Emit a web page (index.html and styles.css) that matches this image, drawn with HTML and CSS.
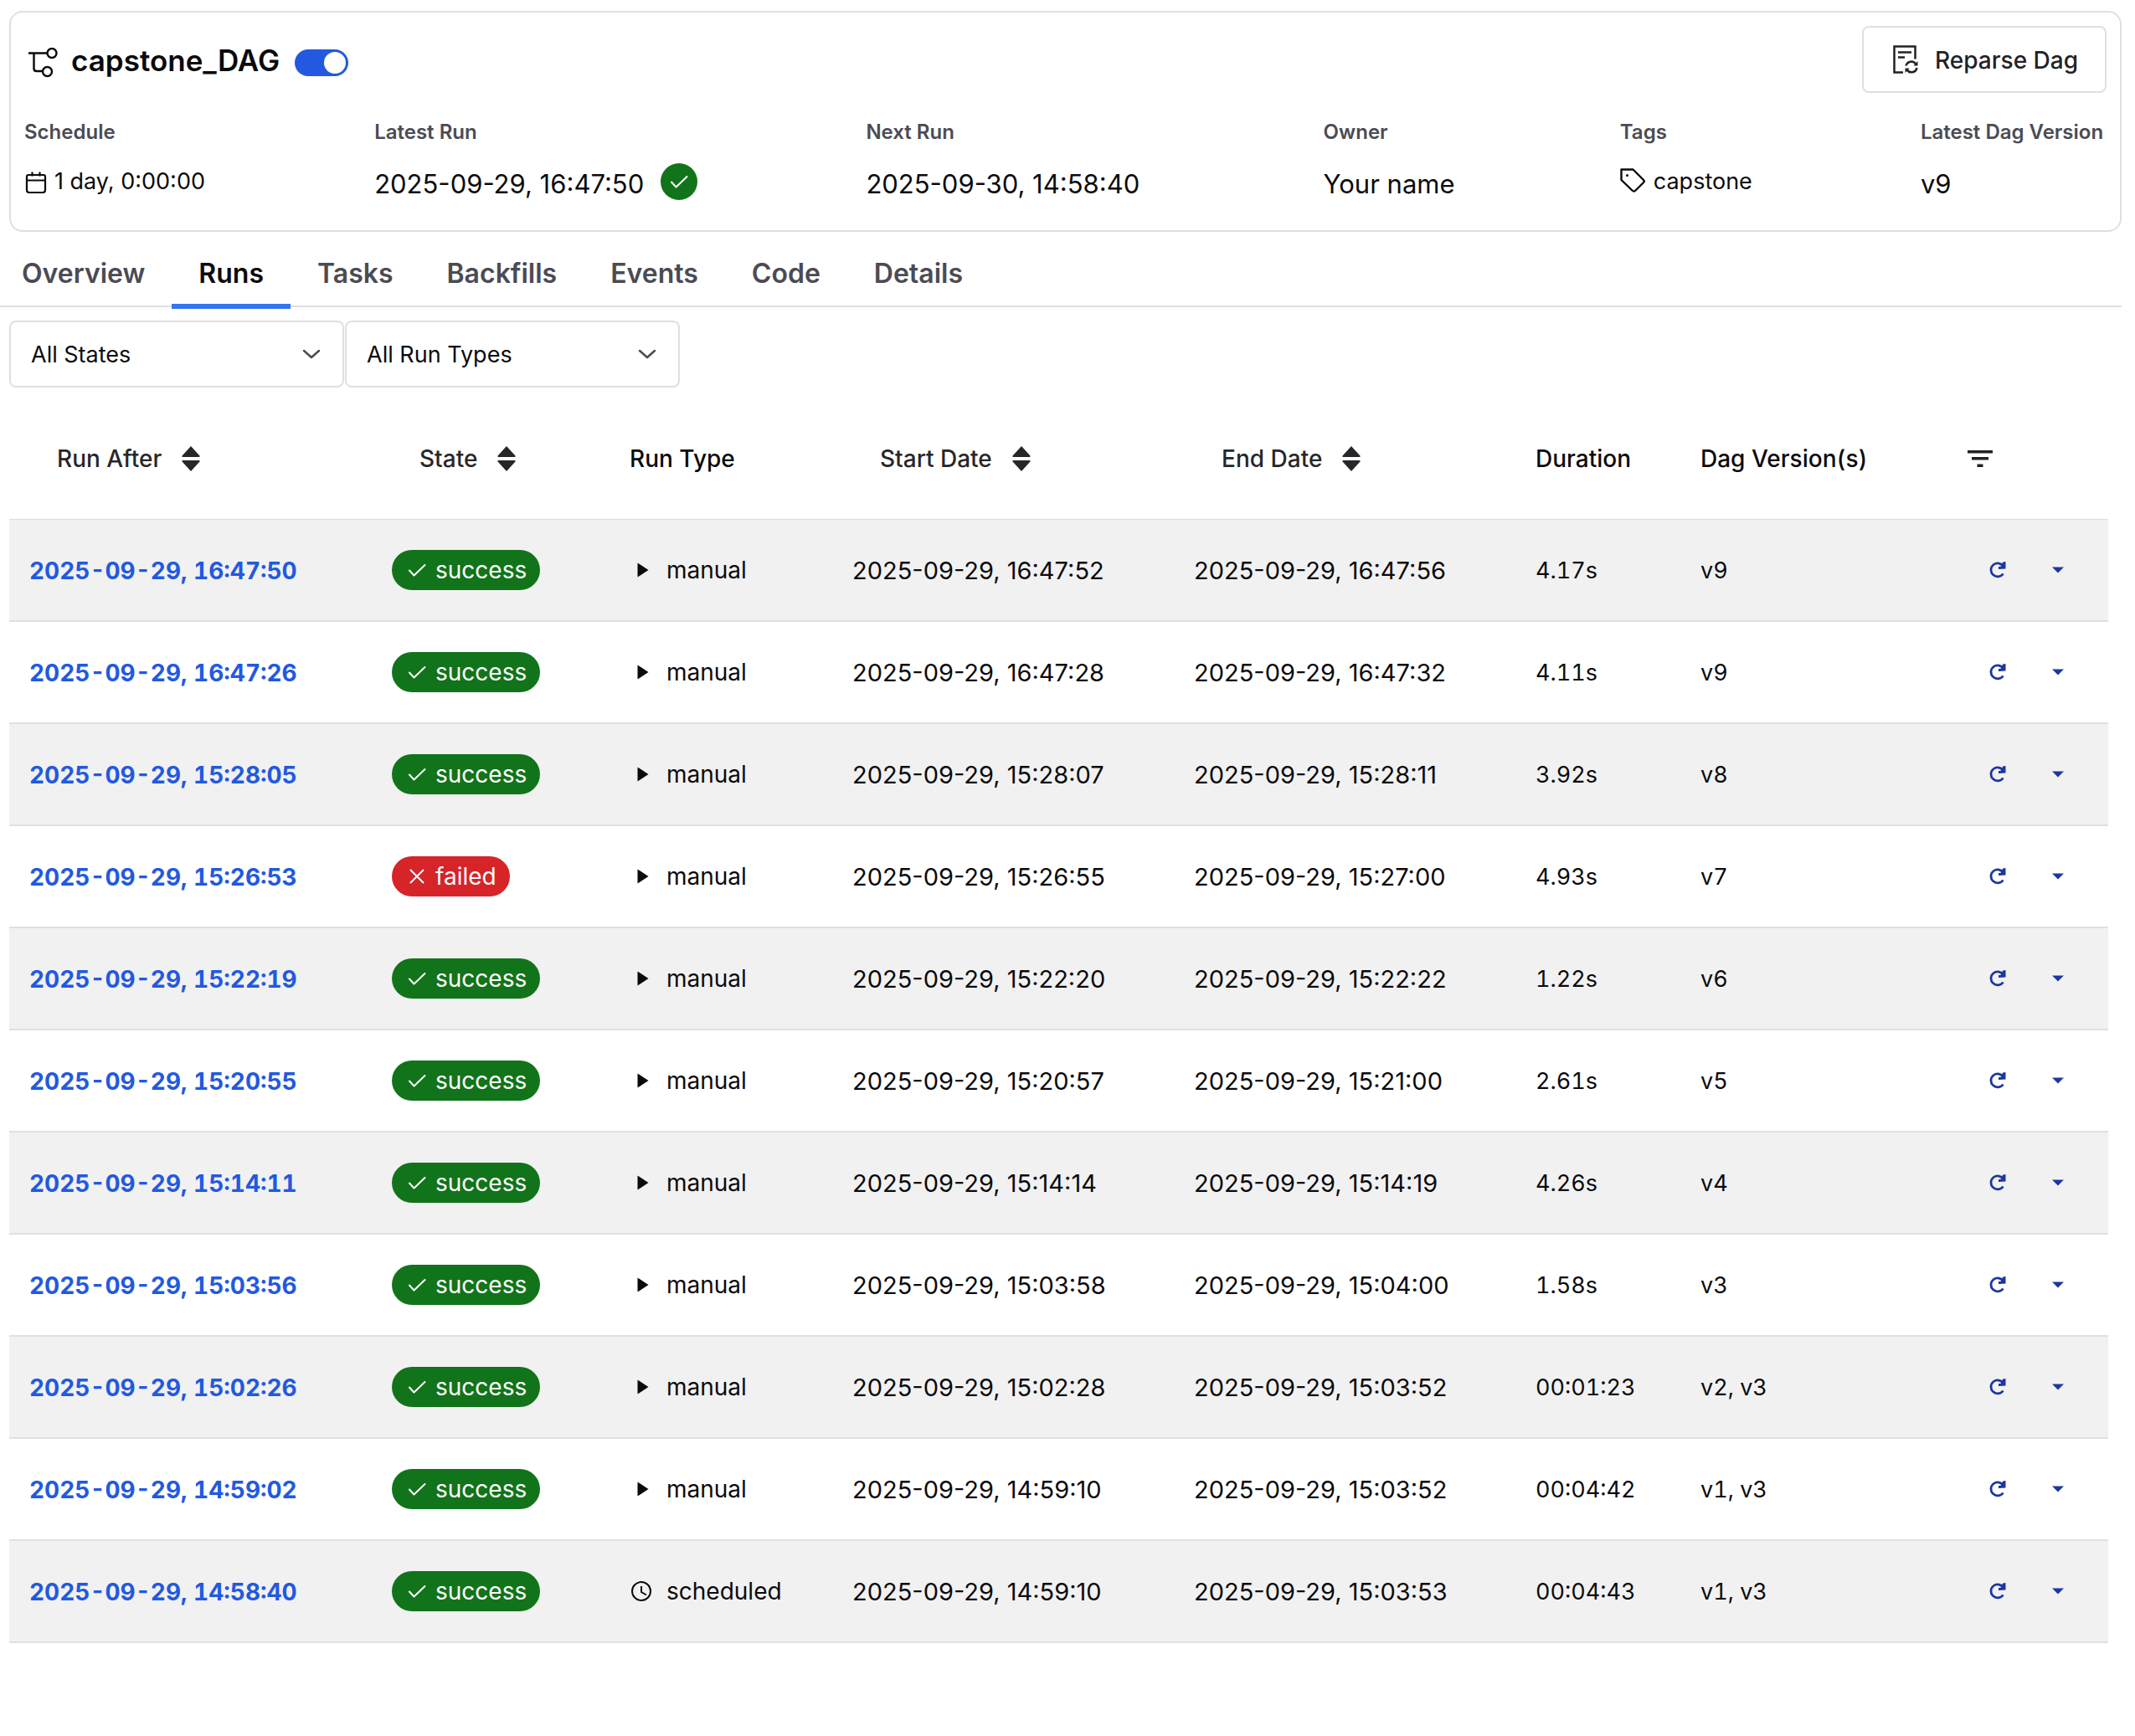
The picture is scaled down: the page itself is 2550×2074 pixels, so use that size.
FILE: index.html
```html
<!DOCTYPE html>
<html lang="en">
<head>
<meta charset="utf-8">
<meta name="viewport" content="width=device-width">
<title>capstone_DAG</title>
<link rel="stylesheet" href="styles.css">
</head>
<body>
<svg class="sprite" aria-hidden="true">
  <symbol id="i-check" viewBox="0 0 28 28"><path d="M5 14.500l5.500 6L23.500 8" fill="none" stroke="currentColor" stroke-width="2" stroke-linecap="round" stroke-linejoin="round"/></symbol>
  <symbol id="i-x" viewBox="0 0 28 28"><path d="M6.500 6.500l15 15M21.500 6.500l-15 15" fill="none" stroke="currentColor" stroke-width="2" stroke-linecap="round"/></symbol>
  <symbol id="i-play" viewBox="0 0 28 28"><path d="M9.500 5.500v17L22.500 14z" fill="currentColor"/></symbol>
  <symbol id="i-clock" viewBox="0 0 28 28"><g fill="none" stroke="currentColor" stroke-width="2"><circle cx="14" cy="14" r="11"/><path d="M14 8v7l6 3.500"/></g></symbol>
  <symbol id="i-sort" viewBox="0 0 22 30"><path d="M11 0l10 11q2 2-1 2H2q-3 0-1-2zM11 30l10-11q2-2-1-2H2q-3 0-1 2z" fill="currentColor"/></symbol>
  <symbol id="i-chevron" viewBox="0 0 28 28"><path d="M5 10l9 8 9-8" fill="none" stroke="currentColor" stroke-width="2.500" stroke-linecap="round" stroke-linejoin="round"/></symbol>
  <symbol id="i-redo" viewBox="0 0 20 20"><path d="M16.500 14.500a8 8 0 1 1 .500-8.500" fill="none" stroke="currentColor" stroke-width="2.800"/><path d="M16.200 .500l3.300-.500v8.500l-8.500.500v-3h2.500z" fill="currentColor"/></symbol>
  <symbol id="i-down" viewBox="0 0 14 8"><path d="M0 .500h14L7 7.500z" fill="currentColor"/></symbol>
</svg>
<main class="page">
  <section class="card">
    <header class="card-head">
      <svg class="dag-icon" viewBox="0 0 36 36"><g fill="none" stroke="currentColor" stroke-width="2.400"><path d="M0 6.500h22M6.500 6.500v18.500q0 3 3 3h7"/><circle cx="28" cy="6.500" r="5.500"/><circle cx="22.500" cy="28.500" r="5.500"/></g></svg>
      <h1 class="title">capstone_DAG</h1>
      <input class="switch" type="checkbox" role="switch" aria-label="Toggle DAG" checked>
      <button class="reparse" type="button">
        <svg class="reparse-icon" viewBox="0 0 30 34"><g fill="none" stroke="currentColor" stroke-width="2.500"><path d="M12 32.500H1.500v-31h25v15M6 8.500h16M6 14.500h8"/><path d="M15.500 24.500a6.500 6.500 0 0 1 12-1.500M28.500 27a6.500 6.500 0 0 1-12 2"/></g><path d="M24.500 24.500h5V19zM14.500 33v-5.500h5z" fill="currentColor"/></svg>
        Reparse Dag
      </button>
    </header>
    <dl class="stats">
      <div class="stat"><dt>Schedule</dt><dd class="compact"><svg class="icon" viewBox="0 0 28 28"><path d="M5 6h18q2 0 2 2v16q0 3-3 3H6q-3 0-3-3V8q0-2 2-2zM3 12.500h22M9.500 2.500v5M18.500 2.500v5" fill="none" stroke="currentColor" stroke-width="2.200"/></svg>1 day, 0:00:00</dd></div>
      <div class="stat"><dt>Latest Run</dt><dd>2025-09-29, 16:47:50<span class="dot"><svg class="icon"><use href="#i-check"/></svg></span></dd></div>
      <div class="stat"><dt>Next Run</dt><dd>2025-09-30, 14:58:40</dd></div>
      <div class="stat"><dt>Owner</dt><dd>Your name</dd></div>
      <div class="stat"><dt>Tags</dt><dd class="compact"><svg class="tag-icon" viewBox="0 0 32 32"><path d="M1.500 1.500h14L28 14q1.500 1.500 0 3l-9.500 9.500q-2 2-4 0L1.500 14z" fill="none" stroke="currentColor" stroke-width="2.400" stroke-linejoin="round"/><circle cx="8.500" cy="8.500" r="1.500" fill="currentColor"/></svg>capstone</dd></div>
      <div class="stat"><dt>Latest Dag Version</dt><dd>v9</dd></div>
    </dl>
  </section>

  <nav class="tabs">
    <a href="#overview">Overview</a>
    <a href="#runs" class="active" aria-current="page">Runs</a>
    <a href="#tasks">Tasks</a>
    <a href="#backfills">Backfills</a>
    <a href="#events">Events</a>
    <a href="#code">Code</a>
    <a href="#details">Details</a>
  </nav>

  <div class="filters">
    <div class="select"><select aria-label="State"><option>All States</option></select><svg class="select-icon"><use href="#i-chevron"/></svg></div>
    <div class="select"><select aria-label="Run type"><option>All Run Types</option></select><svg class="select-icon"><use href="#i-chevron"/></svg></div>
  </div>

  <table class="runs">
    <colgroup><col class="c-after"><col class="c-state"><col class="c-type"><col class="c-date"><col class="c-date"><col class="c-duration"><col class="c-version"><col class="c-actions"></colgroup>
    <thead>
      <tr>
        <th><button class="sort" type="button">Run After<svg class="sort-icon"><use href="#i-sort"/></svg></button></th>
        <th><button class="sort" type="button">State<svg class="sort-icon"><use href="#i-sort"/></svg></button></th>
        <th>Run Type</th>
        <th><button class="sort" type="button">Start Date<svg class="sort-icon"><use href="#i-sort"/></svg></button></th>
        <th><button class="sort" type="button">End Date<svg class="sort-icon"><use href="#i-sort"/></svg></button></th>
        <th>Duration</th>
        <th>Dag Version(s)</th>
        <th><button class="columns" type="button" aria-label="Filter columns"><svg class="columns-icon" viewBox="0 0 30 20"><path d="M0 0h30v3.500H0zM5 8h20v3.500H5zM11.500 16.500h7V20h-7z" fill="currentColor"/></svg></button></th>
      </tr>
    </thead>
    <tbody id="rows"></tbody>
  </table>
</main>
<script src="runs.js"></script>
</body>
</html>
```

FILE: styles.css
```css
* { box-sizing: border-box; }
body { margin: 0; background: #fff; color: #0b0b0d; font: 28px/40px Inter, sans-serif; }
button, select { font: inherit; color: inherit; background: none; border: 0; padding: 0; margin: 0; }
svg { display: block; flex: none; }
.sprite { display: none; }
.icon { width: 28px; height: 28px; }

.page { padding: 13px 16px 0 0; }

.card { margin-left: 11px; padding: 16px 16px 36px; border: 2px solid #e0e0e0; border-radius: 16px; }
.card-head { display: flex; align-items: center; height: 80px; padding-left: 5px; }
.dag-icon { width: 36px; height: 36px; margin: 8px 15px 0 0; }
.title { margin: 0 18px 0 0; padding-top: 2px; font-size: 35px; line-height: 48px; font-weight: 600; }
.switch { appearance: none; width: 64px; height: 32px; margin: 8px 0 0; padding: 3px; border-radius: 16px; background: #2259e0; display: flex; justify-content: flex-end; }
.switch::before { content: ""; width: 26px; height: 26px; border-radius: 50%; background: #fff; }
.reparse { display: flex; align-items: center; gap: 20px; height: 80px; margin-left: auto; padding: 2px 32px 0 35px; border: 2px solid #e0e0e0; border-radius: 8px; color: #222225; font-weight: 500; }
.reparse-icon { width: 30px; height: 34px; margin-bottom: 2px; }

.stats { display: grid; grid-template-columns: 418fr 587fr 546fr 354fr 359fr 222fr; margin: 31px 0 0; }
.stat { min-width: 0; white-space: nowrap; }
dt { font-size: 24px; line-height: 32px; font-weight: 600; color: #4b4b54; }
dd { display: flex; align-items: flex-end; height: 44px; margin: 21px 0 0; font-size: 31px; line-height: 38px; }
dd.compact { align-items: center; gap: 8px; font-size: 27px; }
.tag-icon { width: 32px; height: 32px; }
.dot { display: flex; align-items: center; justify-content: center; width: 44px; height: 44px; margin-left: 20px; border-radius: 50%; background: #11741a; color: #fff; }

.tabs { display: flex; height: 90px; padding-top: 20px; border-bottom: 2px solid #e0e0e0; }
.tabs a { height: 72px; padding: 10px 32px 0; color: #4b4b54; font-size: 32px; font-weight: 600; text-decoration: none; }
.tabs a:first-child { padding-left: 26px; }
.tabs a.active { color: #0b0b0d; border-bottom: 6px solid #3575ee; }

.filters { display: flex; gap: 1px; margin: 16px 0 0 11px; }
.select { position: relative; width: 400px; }
.select select { appearance: none; display: block; width: 100%; height: 80px; padding: 2px 24px 0; border: 2px solid #e0e0e0; border-radius: 8px; background: #fff; font-size: 27px; }
.select-icon { position: absolute; right: 25px; top: 26px; width: 28px; height: 28px; color: #4b4b54; pointer-events: none; }

.runs { width: calc(100% - 27px); margin: 12px 0 0 11px; table-layout: fixed; border-collapse: separate; border-spacing: 0; font-variant-numeric: tabular-nums; }
.c-after { width: 433px; }
.c-state { width: 284px; }
.c-type { width: 266px; }
.c-date { width: 408px; }
.c-duration { width: 197px; }
.c-version { width: 260px; }
.c-actions { width: 251px; }
th, td { padding: 0 0 0 24px; text-align: left; white-space: nowrap; }
th { height: 146px; border-bottom: 1px solid #dcdcdc; font-weight: 500; }
td { height: 122px; border-bottom: 2px solid #e0e0e0; }
tbody tr:nth-child(odd) { background: #f1f1f1; }
.sort { display: flex; align-items: center; gap: 24px; padding-left: 33px; color: #27272a; font-weight: 500; }
.sort-icon { width: 22px; height: 30px; }
.columns { display: block; margin-left: 59px; color: #222225; }
.columns-icon { width: 30px; height: 20px; }

.run-link { color: #2259e0; font-weight: 700; text-decoration: none; }
.after { padding-top: 2px; }
.date { padding-top: 2px; font-size: 29px; font-variant-numeric: normal; }
.text { padding-top: 2px; font-size: 27px; }
.badge { display: inline-flex; align-items: center; gap: 8px; height: 48px; padding: 0 16px; border-radius: 24px; background: #11741a; color: #fff; vertical-align: middle; }
.badge.failed { background: #d62428; }
.type { display: flex; align-items: center; gap: 16px; }
.actions { display: flex; align-items: center; gap: 55px; padding-left: 85px; color: #1b37a0; }
.redo-icon { width: 20px; height: 20px; }
.down-icon { width: 14px; height: 8px; }
```

FILE: runs.js
```js
const runs = [
  ["16:47:50", "success", "manual", "16:47:52", "16:47:56", "4.17s", "v9"],
  ["16:47:26", "success", "manual", "16:47:28", "16:47:32", "4.11s", "v9"],
  ["15:28:05", "success", "manual", "15:28:07", "15:28:11", "3.92s", "v8"],
  ["15:26:53", "failed", "manual", "15:26:55", "15:27:00", "4.93s", "v7"],
  ["15:22:19", "success", "manual", "15:22:20", "15:22:22", "1.22s", "v6"],
  ["15:20:55", "success", "manual", "15:20:57", "15:21:00", "2.61s", "v5"],
  ["15:14:11", "success", "manual", "15:14:14", "15:14:19", "4.26s", "v4"],
  ["15:03:56", "success", "manual", "15:03:58", "15:04:00", "1.58s", "v3"],
  ["15:02:26", "success", "manual", "15:02:28", "15:03:52", "00:01:23", "v2, v3"],
  ["14:59:02", "success", "manual", "14:59:10", "15:03:52", "00:04:42", "v1, v3"],
  ["14:58:40", "success", "scheduled", "14:59:10", "15:03:53", "00:04:43", "v1, v3"],
];
const day = "2025-09-29, ";

document.getElementById("rows").innerHTML = runs.map(([after, state, type, start, end, duration, version]) => `
  <tr>
    <td class="after"><a class="run-link" href="#run">${day}${after}</a></td>
    <td><span class="badge ${state}"><svg class="icon"><use href="#i-${state === "failed" ? "x" : "check"}"/></svg>${state}</span></td>
    <td><span class="type"><svg class="icon"><use href="#i-${type === "manual" ? "play" : "clock"}"/></svg>${type}</span></td>
    <td class="date">${day}${start}</td>
    <td class="date">${day}${end}</td>
    <td class="text">${duration}</td>
    <td class="text">${version}</td>
    <td><div class="actions">
      <button type="button" aria-label="Clear run"><svg class="redo-icon"><use href="#i-redo"/></svg></button>
      <button type="button" aria-label="More actions"><svg class="down-icon"><use href="#i-down"/></svg></button>
    </div></td>
  </tr>`).join("");
```
